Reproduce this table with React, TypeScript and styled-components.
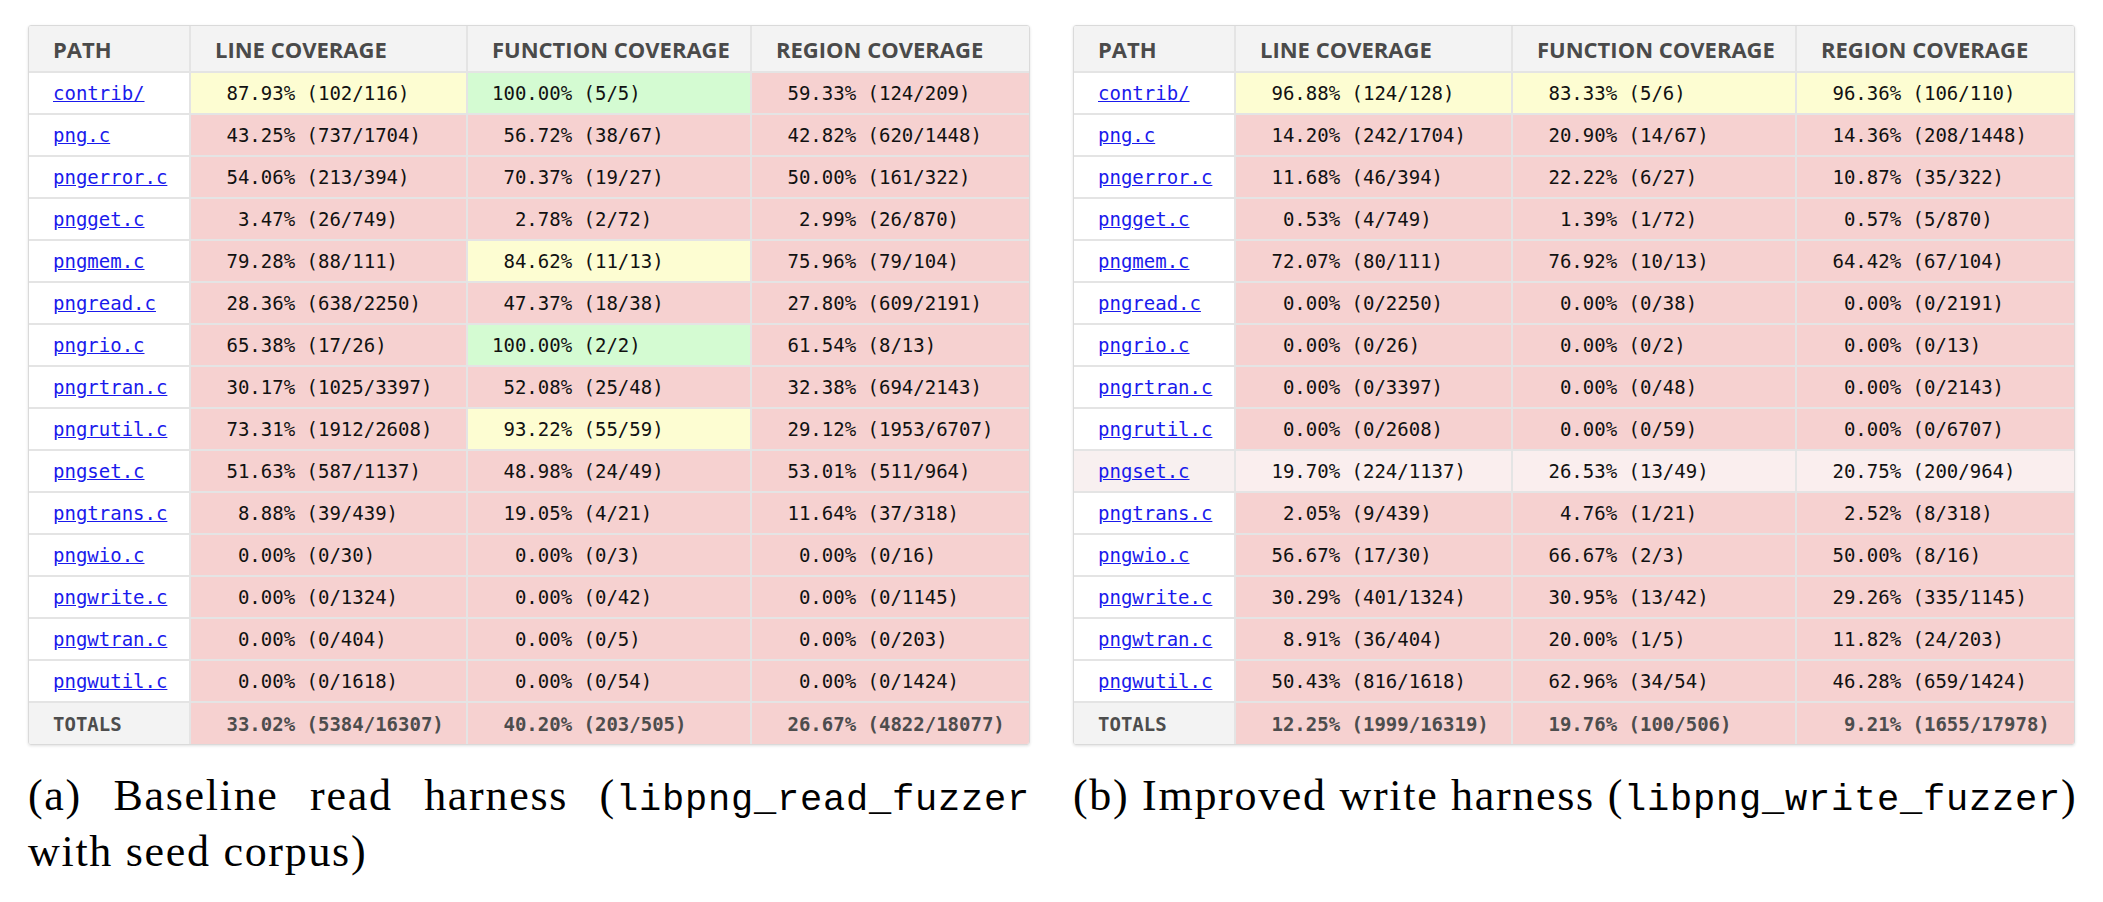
import React from "react";
import styled, { createGlobalStyle } from "styled-components";

type Level = "red" | "yellow" | "green";

// path, line, function, region as "covered/total"
type Row = [string, string, string, string];

const readRows: Row[] = [
  ["contrib/", "102/116", "5/5", "124/209"],
  ["png.c", "737/1704", "38/67", "620/1448"],
  ["pngerror.c", "213/394", "19/27", "161/322"],
  ["pngget.c", "26/749", "2/72", "26/870"],
  ["pngmem.c", "88/111", "11/13", "79/104"],
  ["pngread.c", "638/2250", "18/38", "609/2191"],
  ["pngrio.c", "17/26", "2/2", "8/13"],
  ["pngrtran.c", "1025/3397", "25/48", "694/2143"],
  ["pngrutil.c", "1912/2608", "55/59", "1953/6707"],
  ["pngset.c", "587/1137", "24/49", "511/964"],
  ["pngtrans.c", "39/439", "4/21", "37/318"],
  ["pngwio.c", "0/30", "0/3", "0/16"],
  ["pngwrite.c", "0/1324", "0/42", "0/1145"],
  ["pngwtran.c", "0/404", "0/5", "0/203"],
  ["pngwutil.c", "0/1618", "0/54", "0/1424"],
];
const readTotals: Row = ["TOTALS", "5384/16307", "203/505", "4822/18077"];

const writeRows: Row[] = [
  ["contrib/", "124/128", "5/6", "106/110"],
  ["png.c", "242/1704", "14/67", "208/1448"],
  ["pngerror.c", "46/394", "6/27", "35/322"],
  ["pngget.c", "4/749", "1/72", "5/870"],
  ["pngmem.c", "80/111", "10/13", "67/104"],
  ["pngread.c", "0/2250", "0/38", "0/2191"],
  ["pngrio.c", "0/26", "0/2", "0/13"],
  ["pngrtran.c", "0/3397", "0/48", "0/2143"],
  ["pngrutil.c", "0/2608", "0/59", "0/6707"],
  ["pngset.c", "224/1137", "13/49", "200/964"],
  ["pngtrans.c", "9/439", "1/21", "8/318"],
  ["pngwio.c", "17/30", "2/3", "8/16"],
  ["pngwrite.c", "401/1324", "13/42", "335/1145"],
  ["pngwtran.c", "36/404", "1/5", "24/203"],
  ["pngwutil.c", "816/1618", "34/54", "659/1424"],
];
const writeTotals: Row = ["TOTALS", "1999/16319", "100/506", "1655/17978"];

const GlobalStyle = createGlobalStyle`
  body {
    margin: 0;
    background: #ffffff;
  }
`;

const Page = styled.div`
  display: flex;
  gap: 43px;
  padding: 25px 0 0 28px;
`;

const Figure = styled.figure`
  margin: 0;
  width: 1002px;
  display: flex;
  flex-direction: column;
`;

const TableFrame = styled.div`
  border: 1px solid #dadada;
  border-radius: 3px;
  box-shadow: 0 1px 3px rgba(0, 0, 0, 0.12);
  overflow: hidden;
`;

const Table = styled.table`
  width: 100%;
  border-collapse: collapse;
  table-layout: fixed;
`;

const Th = styled.th<{ $w: number }>`
  box-sizing: border-box;
  width: ${(p) => p.$w}px;
  height: 46px;
  padding: 0 0 0 24px;
  background: #f3f3f3;
  border-right: 2px solid #e4e4e4;
  border-bottom: 2px solid #e4e4e4;
  text-align: left;
  font-family: "Open Sans", "Noto Sans", sans-serif;
  font-weight: 700;
  font-size: 22px;
  color: #4a4a4a;

  &:last-child {
    border-right: none;
  }
`;

const cellBg = {
  red: "#f6d1d0",
  yellow: "#fdfdd2",
  green: "#d4fbd2",
};

const hoverBg = {
  red: "#faeeee",
  yellow: "#fdfdee",
  green: "#eefbee",
};

const Tr = styled.tr`
  &:last-child td {
    border-bottom: none;
  }
`;

const Td = styled.td<{ $level?: Level; $hover?: boolean; $total?: boolean }>`
  box-sizing: border-box;
  height: 42px;
  padding: 0 0 0 24px;
  border-right: 2px solid #e4e4e4;
  border-bottom: 2px solid #e4e4e4;
  background: ${(p) =>
    p.$level
      ? (p.$hover ? hoverBg : cellBg)[p.$level]
      : p.$total
        ? "#f3f3f3"
        : p.$hover
          ? "#f8f0f0"
          : "#ffffff"};
  font-family: "DejaVu Sans Mono", monospace;
  font-size: 19px;
  font-weight: ${(p) => (p.$total ? 700 : 400)};
  white-space: pre;
  color: ${(p) => (p.$total ? "#4d4d4d" : "#111111")};

  &:last-child {
    border-right: none;
  }
`;

const PathLink = styled.a`
  color: #1a1aec;
  text-decoration: underline;
`;

const Caption = styled.figcaption<{ $single?: boolean }>`
  margin-top: 25px;
  font-family: "Liberation Serif", serif;
  font-size: 44px;
  line-height: 51px;
  letter-spacing: 1.7px;
  text-align: justify;
  white-space: ${(p) => (p.$single ? "nowrap" : "normal")};
  color: #000000;
`;

const Code = styled.code`
  font-family: "Liberation Mono", monospace;
  font-size: 37px;
  letter-spacing: 0.8px;
`;

const widths = [161, 277, 284, 278];
const headers = ["PATH", "LINE COVERAGE", "FUNCTION COVERAGE", "REGION COVERAGE"];

function coverage(frac: string): { text: string; level: Level } {
  const [c, t] = frac.split("/").map(Number);
  const pct = t === 0 ? 0 : (c / t) * 100;
  const level: Level = pct >= 100 ? "green" : pct >= 80 ? "yellow" : "red";
  return { text: `${(pct.toFixed(2) + "%").padStart(7)} (${frac})`, level };
}

const CoverageTable: React.FC<{ rows: Row[]; totals: Row; hovered?: string }> = ({
  rows,
  totals,
  hovered,
}) => (
  <TableFrame>
    <Table>
      <thead>
        <tr>
          {headers.map((h, i) => (
            <Th key={h} $w={widths[i]}>
              {h}
            </Th>
          ))}
        </tr>
      </thead>
      <tbody>
        {rows.map(([path, ...cols]) => {
          const hover = path === hovered;
          return (
            <Tr key={path}>
              <Td $hover={hover}>
                <PathLink href="#">{path}</PathLink>
              </Td>
              {cols.map((frac, i) => {
                const cov = coverage(frac);
                return (
                  <Td key={i} $level={cov.level} $hover={hover}>
                    {cov.text}
                  </Td>
                );
              })}
            </Tr>
          );
        })}
        <Tr>
          <Td $total>{totals[0]}</Td>
          {totals.slice(1).map((frac, i) => {
            const cov = coverage(frac);
            return (
              <Td key={i} $level={cov.level} $total>
                {cov.text}
              </Td>
            );
          })}
        </Tr>
      </tbody>
    </Table>
  </TableFrame>
);

const App: React.FC = () => (
  <>
    <GlobalStyle />
    <Page>
      <Figure>
        <CoverageTable rows={readRows} totals={readTotals} />
        <Caption>
          (a) Baseline read harness (<Code>libpng_read_fuzzer</Code> with seed corpus)
        </Caption>
      </Figure>
      <Figure>
        <CoverageTable rows={writeRows} totals={writeTotals} hovered="pngset.c" />
        <Caption $single>
          (b) Improved write harness (<Code>libpng_write_fuzzer</Code>)
        </Caption>
      </Figure>
    </Page>
  </>
);

export default App;
